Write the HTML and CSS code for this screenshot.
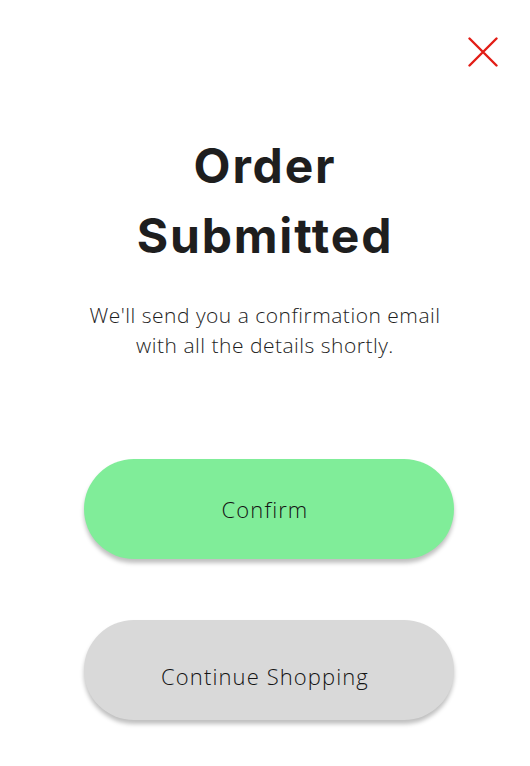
FILE: index.html
```html
<!DOCTYPE html>
<html lang="en">
<head>
<meta charset="utf-8">
<title>Order Submitted</title>
<link rel="stylesheet" href="styles.css">
</head>
<body>
<main class="screen">
  <header class="top">
    <button class="close" aria-label="Close">
      <svg width="30" height="30" viewBox="0 0 30 30"><path d="M1.5 1.5 L28.5 28.5 M28.5 1.5 L1.5 28.5" stroke="#e21d16" stroke-width="2.4" stroke-linecap="round" fill="none"/></svg>
    </button>
  </header>
  <h1 class="title">Order<br>Submitted</h1>
  <p class="msg">We'll send you a confirmation email<br>with all the details shortly.</p>
  <div class="actions">
    <button class="btn btn-confirm">Confirm</button>
    <button class="btn btn-continue">Continue Shopping</button>
  </div>
</main>
</body>
</html>
```
FILE: styles.css
```css
html, body {
  margin: 0;
  padding: 0;
  background: #ffffff;
}
.screen {
  width: 530px;
  min-height: 766px;
  display: flex;
  flex-direction: column;
  align-items: center;
  font-family: "Inter", "Noto Sans", sans-serif;
  color: #1e1e1e;
}
.top {
  align-self: stretch;
  display: flex;
  justify-content: flex-end;
  padding: 37px 32px 0 0;
  height: 30px;
}
.close {
  width: 30px;
  height: 30px;
  padding: 0;
  border: 0;
  background: none;
  display: flex;
}
.title {
  margin: 64px 0 0;
  font-size: 48px;
  line-height: 70px;
  font-weight: 700;
  text-align: center;
  letter-spacing: 1.8px;
  color: #1e1e1e;
}
.msg {
  margin: 29px 0 0;
  font-family: "Open Sans", "Inter", sans-serif;
  font-size: 21px;
  line-height: 30px;
  font-weight: 300;
  letter-spacing: 0.5px;
  text-align: center;
  color: #1e1e1e;
}
.actions {
  margin-top: 99px;
  margin-left: 8px;
  display: flex;
  flex-direction: column;
  gap: 61px;
}
.btn {
  width: 370px;
  height: 100px;
  border: 0;
  border-radius: 50px;
  padding: 0 8px 0 0;
  font-family: "Open Sans", "Inter", sans-serif;
  font-size: 22px;
  font-weight: 300;
  letter-spacing: 1.1px;
  color: #141414;
  box-shadow: 0 4px 4px rgba(0, 0, 0, 0.25);
}
.btn-confirm {
  background: #80ed99;
}
.btn-continue {
  background: #d9d9d9;
  padding-top: 12px;
}
```
